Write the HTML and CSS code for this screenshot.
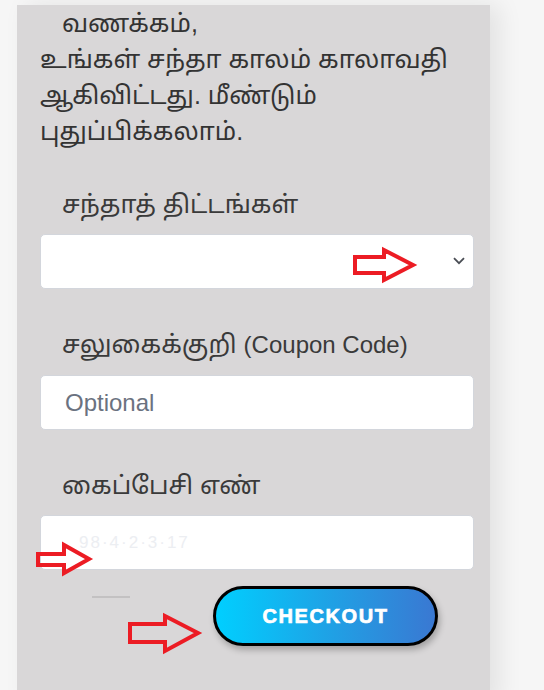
FILE: index.html
```html
<!DOCTYPE html>
<html lang="ta">
<head>
<meta charset="utf-8">
<title>சந்தா புதுப்பிப்பு</title>
<link rel="stylesheet" href="styles.css">
</head>
<body>
<main class="panel">
  <p class="greeting">வணக்கம்,<br>உங்கள் சந்தா காலம் காலாவதி<br>ஆகிவிட்டது. மீண்டும்<br>புதுப்பிக்கலாம்.</p>
  <form class="form">
    <div class="field">
      <label class="label" for="plan">சந்தாத் திட்டங்கள்</label>
      <div class="select-wrap">
        <select id="plan" class="control select"><option></option></select>
        <svg class="chevron" width="12" height="8" viewBox="0 0 12 8"><path d="M1 1.2 L6 6.2 L11 1.2" fill="none" stroke="#4a4e55" stroke-width="1.8"/></svg>
      </div>
    </div>
    <div class="field">
      <label class="label" for="coupon">சலுகைக்குறி <span class="latin">(Coupon Code)</span></label>
      <input id="coupon" class="control" type="text" placeholder="Optional">
    </div>
    <div class="field">
      <label class="label" for="phone">கைப்பேசி எண்</label>
      <input id="phone" class="control phone" type="text" value="98·4·2·3·17">
    </div>
    <div class="actions">
      <span class="rule"></span>
      <button type="button" class="checkout">CHECKOUT</button>
    </div>
  </form>
</main>
<svg class="marks" width="544" height="690" viewBox="0 0 544 690">
  <g fill="none" stroke="#ec1c24" stroke-width="4" stroke-linejoin="miter">
    <polygon points="355,257 384,257 384,250 413,265 384,280 384,273 355,273"/>
    <polygon points="38,554 64,554 64,545 89,559 64,573 64,565 38,565"/>
    <polygon points="130,624 165,624 165,616 198,633 165,651 165,642 130,642"/>
  </g>
</svg>
</body>
</html>
```
FILE: styles.css
```css
html, body {
  margin: 0;
  padding: 0;
}
body {
  background: #f6f6f6;
  font-family: "Liberation Sans", "Noto Sans Tamil", "Lohit Tamil", Arial, sans-serif;
  color: #333;
  height: 690px;
  overflow: hidden;
  position: relative;
}
.panel {
  margin: 5px 0 0 17px;
  width: 473px;
  min-height: 700px;
  box-sizing: border-box;
  padding: 0 16px 0 23px;
  background: #d9d7d8;
  box-shadow: 10px 0 22px rgba(0, 0, 0, 0.08);
}
.greeting {
  margin: 0;
  font-size: 25px;
  line-height: 36px;
  text-indent: 22px;
}
.form {
  display: flex;
  flex-direction: column;
  gap: 37px;
  margin-top: 37px;
}
.field {
  display: flex;
  flex-direction: column;
  gap: 12px;
}
.label {
  font-size: 25px;
  line-height: 36px;
  padding-left: 22px;
  color: #3a3a3a;
}
.latin {
  font-size: 24px;
}
.select-wrap {
  position: relative;
}
.control {
  display: block;
  width: 100%;
  height: 55px;
  box-sizing: border-box;
  border: 1px solid #d3d6dc;
  border-radius: 5px;
  background: #fff;
  padding: 0 24px;
  font-family: "Liberation Sans", Arial, sans-serif;
  font-size: 24px;
  color: #333;
  outline: none;
}
.control::placeholder {
  color: #6b7280;
}
.select {
  appearance: none;
  -webkit-appearance: none;
}
.chevron {
  position: absolute;
  right: 9px;
  top: 23px;
}
.phone {
  color: #eceef2;
  font-size: 17px;
  letter-spacing: 2px;
  padding-left: 38px;
}
.actions {
  display: flex;
  align-items: flex-start;
  margin-top: -21px;
}
.rule {
  width: 38px;
  height: 2px;
  background: #c3c1c2;
  margin: 10px 0 0 52px;
}
.checkout {
  margin-left: 83px;
  width: 225px;
  height: 60px;
  border: 3px solid #000;
  border-radius: 30px;
  background: linear-gradient(90deg, #00cfff 0%, #1ea3e6 50%, #3a78d2 100%);
  color: #fff;
  font-family: "Liberation Sans", Arial, sans-serif;
  font-weight: 700;
  font-size: 20px;
  letter-spacing: 1.6px;
  -webkit-text-stroke: 0.7px #fff;
  box-shadow: 2px 4px 6px rgba(0, 0, 0, 0.25);
  padding: 0;
}
.marks {
  position: absolute;
  left: 0;
  top: 0;
  pointer-events: none;
}
```
